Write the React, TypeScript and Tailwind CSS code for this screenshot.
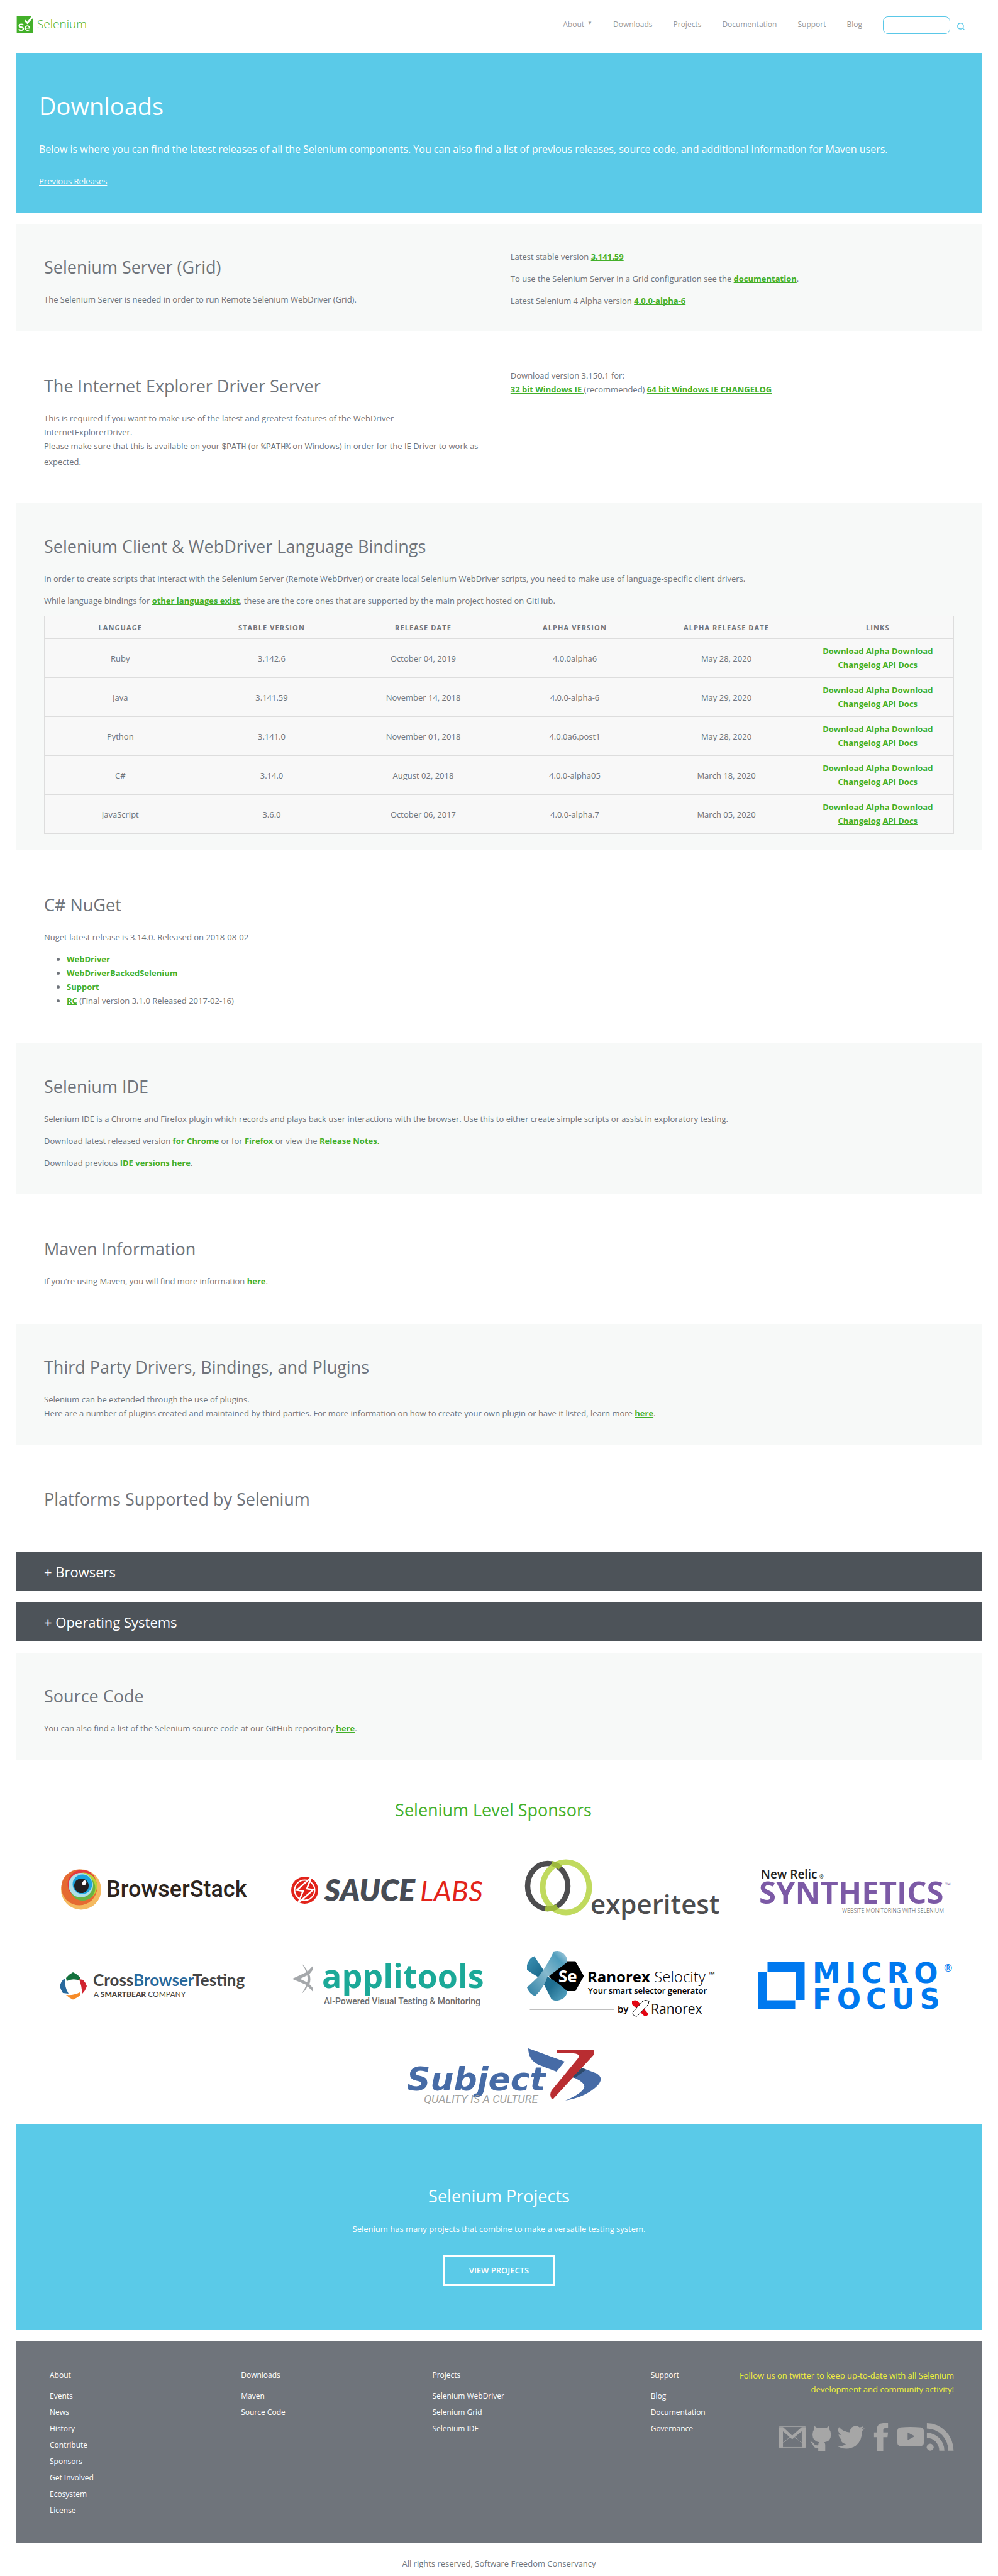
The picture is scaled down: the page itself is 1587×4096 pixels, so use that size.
import type { ReactNode } from "react";
import { SiSelenium } from "react-icons/si";
import { Search } from "lucide-react";

const A = ({ children }: { children: ReactNode }) => (
  <a href="#" className="font-bold text-[#43b02a] underline">
    {children}
  </a>
);

const H2 = ({ children }: { children: ReactNode }) => (
  <h2 className="mb-[21px] text-[27px] leading-[38px]">{children}</h2>
);

const Panel = ({ grey, tall, children }: { grey?: boolean; tall?: boolean; children: ReactNode }) => (
  <section className={`px-11 pt-[50px] ${tall ? "pb-[26px]" : "pb-[39px]"} ${grey ? "bg-[#f7f9f8]" : ""}`}>
    {children}
  </section>
);

const Split = ({ grey, left, right }: { grey?: boolean; left: ReactNode; right: ReactNode }) => (
  <section className={`flex py-[26px] ${grey ? "bg-[#f7f9f8]" : ""}`}>
    <div className="w-[49.5%] border-r border-[#cccccc] pt-6 pr-2 pb-[10px] pl-11">{left}</div>
    <div className="flex-1 pt-[15px] pr-11 pb-3 pl-[26px]">{right}</div>
  </section>
);

const nav = ["Downloads", "Projects", "Documentation", "Support", "Blog"];

const columns = ["Language", "Stable Version", "Release Date", "Alpha Version", "Alpha Release Date", "Links"];

const rows = [
  ["Ruby", "3.142.6", "October 04, 2019", "4.0.0alpha6", "May 28, 2020"],
  ["Java", "3.141.59", "November 14, 2018", "4.0.0-alpha-6", "May 29, 2020"],
  ["Python", "3.141.0", "November 01, 2018", "4.0.0a6.post1", "May 28, 2020"],
  ["C#", "3.14.0", "August 02, 2018", "4.0.0-alpha05", "March 18, 2020"],
  ["JavaScript", "3.6.0", "October 06, 2017", "4.0.0-alpha.7", "March 05, 2020"],
];

const footer = [
  { title: "About", links: ["Events", "News", "History", "Contribute", "Sponsors", "Get Involved", "Ecosystem", "License"] },
  { title: "Downloads", links: ["Maven", "Source Code"] },
  { title: "Projects", links: ["Selenium WebDriver", "Selenium Grid", "Selenium IDE"] },
  { title: "Support", links: ["Blog", "Documentation", "Governance"] },
];

const Header = () => (
  <header className="flex h-[85px] items-start justify-between pt-[25px]">
    <a href="#" className="flex items-center gap-[6px] text-[#43b02a]">
      <SiSelenium className="size-[27px]" />
      <span className="text-[19px] leading-[27px] font-light">Selenium</span>
    </a>
    <nav className="flex items-start text-[12px] text-[#999999]">
      <ul className="flex gap-[33px] pt-1 leading-[20px]">
        <li>
          <a href="#" className="flex gap-[5px]">
            About <span className="text-[8px] leading-[14px]">▼</span>
          </a>
        </li>
        {nav.map((n) => (
          <li key={n}>
            <a href="#">{n}</a>
          </li>
        ))}
      </ul>
      <form className="ml-[33px] flex items-center pt-px pr-[26px]">
        <input
          type="text"
          aria-label="Search"
          className="h-[28px] w-[107px] rounded-[8px] border border-[#5ac8e8] px-2 outline-none"
        />
        <button type="button" aria-label="Submit search" className="ml-[10px] pt-1 text-[#5ac8e8]">
          <Search className="size-[14px]" strokeWidth={2.5} />
        </button>
      </form>
    </nav>
  </header>
);

const Logo = ({ label, box, children }: { label: string; box: string; children: ReactNode }) => (
  <a href="#" aria-label={label} className="block w-full max-w-[328px]">
    <svg viewBox={box} className="w-full" role="img" aria-label={label}>
      {children}
    </svg>
  </a>
);

const sans = "'Open Sans', sans-serif";

const BrowserStack = () => (
  <Logo label="BrowserStack" box="-10 0 328 110">
    <circle cx="39" cy="53.5" r="32" fill="#f4b960" />
    <circle cx="36" cy="50" r="28.5" fill="#e56a32" />
    <circle cx="40.5" cy="45" r="23" fill="#e43b3f" />
    <circle cx="43" cy="48" r="21.5" fill="#b8d433" />
    <circle cx="41.5" cy="51" r="20" fill="#69b445" />
    <circle cx="38.5" cy="46.5" r="19.5" fill="#afdfe9" />
    <circle cx="41" cy="45" r="15.5" fill="#1ba4dc" />
    <circle cx="39.5" cy="47.5" r="11.5" fill="#231f20" />
    <ellipse cx="44" cy="43" rx="3" ry="4" fill="#fff" transform="rotate(25 44 43)" />
    <text x="79" y="65" fontFamily="Roboto, sans-serif" fontWeight="500" fontSize="36" fill="#2d241d">
      BrowserStack
    </text>
  </Logo>
);

const SauceLabs = () => (
  <Logo label="Sauce Labs" box="-10 0 328 110">
    <circle cx="22.5" cy="54.5" r="21.5" fill="#e2231a" />
    <circle cx="22.5" cy="54.5" r="16" fill="none" stroke="#fff" strokeWidth="2" />
    <path d="M33 34 L10 54.500 L20 56 L12 75 L36 54 L26 52 Z" fill="#e2231a" stroke="#fff" strokeWidth="2.500" />
    <text x="54" y="72" fontFamily="Lato, sans-serif" fontStyle="italic" fontWeight="800" fontSize="48" fill="#474c55">
      SAUCE
    </text>
    <text x="206" y="72" fontFamily="Lato, sans-serif" fontStyle="italic" fontWeight="400" fontSize="45" fill="#e2231a">
      LABS
    </text>
  </Logo>
);

const Experitest = () => (
  <Logo label="Experitest" box="-10 0 328 110">
    <ellipse cx="38" cy="48" rx="32" ry="36" fill="none" stroke="#4d4d4f" strokeWidth="8.500" />
    <ellipse cx="67" cy="50" rx="37" ry="40" fill="none" stroke="#c0da5e" strokeWidth="9" />
    <path d="M44 12 Q52 13 58 19 M34 84 Q44 85 53 81" fill="none" stroke="#9db83d" strokeWidth="8" />
    <text x="106" y="92" fontFamily={sans} fontWeight="600" fontSize="42" fill="#4d4d4f">
      experitest
    </text>
  </Logo>
);

const NewRelic = () => (
  <Logo label="New Relic Synthetics" box="-10 0 328 110">
    <text x="5" y="36" fontFamily={sans} fontWeight="600" fontSize="19" fill="#231f20">
      New Relic
    </text>
    <text x="98" y="36" fontFamily={sans} fontWeight="600" fontSize="8" fill="#231f20">
      ®
    </text>
    <text x="2" y="76" fontFamily={sans} fontWeight="700" fontSize="49" fill="#7c5aa6">
      SYNTHETICS
    </text>
    <text x="298" y="51" fontFamily={sans} fontSize="12" fill="#7c5aa6">
      ™
    </text>
    <text x="296" y="90" textAnchor="end" fontFamily={sans} fontWeight="300" fontSize="9" fill="#4d4d4f">
      WEBSITE MONITORING WITH SELENIUM
    </text>
  </Logo>
);

const CrossBrowserTesting = () => (
  <Logo label="CrossBrowserTesting" box="-10 0 328 110">
    <path d="M15 44 Q20 38 26 35 Q33 38 38 44 L36 48 Q26 44 16 49 Z" fill="#14713d" />
    <path d="M12 45 Q7 50 5 57 Q7 64 10 68 L19 69 Q12 58 14 46 Z" fill="#28699d" />
    <path d="M36 46 L42 47 Q46 51 48 57 Q46 64 41 69 Q40 57 36 46 Z" fill="#d1232f" />
    <path d="M15 71 Q28 72 37 67 L38 71 Q33 76 26 78.500 Q20 76 15 71 Z" fill="#f68b28" />
    <text x="58" y="57" fontFamily="Lato, sans-serif" fontWeight="700" fontSize="26" fill="#454545">
      Cross<tspan fill="#28699d">Browser</tspan>Testing
    </text>
    <text x="59" y="74" fontFamily="Lato, sans-serif" fontSize="12" fill="#454545">
      A <tspan fontWeight="900">SMARTBEAR</tspan> COMPANY
    </text>
  </Logo>
);

const Applitools = () => (
  <Logo label="Applitools" box="-10 0 328 110">
    <path
      d="M18 21.500 Q24 27 27 34 L35.500 25 L35.500 31 L30 38 Q33 46 30 54 L35.500 60 L35.500 66 L27 57 Q24 64 18 69 Q23 61 25 55 L2.500 45.500 L25 35 Q22 27 18 21.500 Z M26.500 40 L15 45.500 L26.500 51 Q28 45 26.500 40 Z"
      fill="#a5a8ab"
      fillRule="evenodd"
    />
    <text x="50" y="60" fontFamily={sans} fontWeight="700" fontSize="52" fill="#1ba998">
      applitools
    </text>
    <text x="53" y="86" fontFamily="Roboto, sans-serif" fontWeight="500" fontSize="14" fill="#6d6e70">
      AI-Powered Visual Testing &amp; Monitoring
    </text>
  </Logo>
);

const Ranorex = () => (
  <Logo label="Ranorex Selocity" box="-10 0 328 110">
    <defs>
      <linearGradient id="ranorexBand" x1="0" y1="1" x2="1" y2="0">
        <stop offset="0" stopColor="#2b7ea3" />
        <stop offset="0.500" stopColor="#86b9cd" />
        <stop offset="0.800" stopColor="#4f9dbd" />
        <stop offset="1" stopColor="#b5d3e2" />
      </linearGradient>
      <linearGradient id="ranorexCross" x1="0" y1="0" x2="1" y2="1">
        <stop offset="0" stopColor="#3c93b6" />
        <stop offset="0.350" stopColor="#1f6e90" />
        <stop offset="0.650" stopColor="#1f6e90" />
        <stop offset="1" stopColor="#5aa8c6" />
      </linearGradient>
    </defs>
    <path d="M59 17.500 H82 L95.500 41 L82 65 H59 L40 41 Z" fill="#000" />
    <path d="M5 24 Q8 12 17 9.500 Q23 20 29 28 L38 42 Q52 50 68 64 Q70 76 54 80 Q44 81 42 74 L27 45 Q14 38 5 31 Z" fill="url(#ranorexCross)" />
    <path d="M47 3 Q56 0 63 5 Q70 11 69 19 Q55 30 37 43 Q33 58 18 73 Q8 69 5 59 Q16 49 25 40 Q38 22 47 3 Z" fill="url(#ranorexBand)" />
    <text x="55" y="51" fontFamily={sans} fontWeight="700" fontSize="26" fill="#fff">
      Se
    </text>
    <text x="101" y="51" fontFamily={sans} fontWeight="700" fontSize="24" fill="#000">
      Ranorex <tspan fontWeight="300">Selocity</tspan>
    </text>
    <text x="294" y="43" fontFamily={sans} fontSize="13" fill="#000">
      ™
    </text>
    <text x="102" y="69" fontFamily={sans} fontWeight="600" fontSize="13" fill="#000">
      Your smart selector generator
    </text>
    <path d="M9.500 94.500 H143" stroke="#bfbfbf" />
    <text x="149" y="99" fontFamily={sans} fontWeight="600" fontSize="15" fill="#000">
      by
    </text>
    <path d="M172 81 Q177 78 181 81 L198 101 Q196 106 191 104 L172 86 Z" fill="#e30613" />
    <path d="M199 81 Q194 78 189 81 L173 99 Q173 105 180 105 L198 86 Z" fill="#fff" stroke="#111" />
    <text x="202" y="101" fontFamily={sans} fontWeight="500" fontSize="21" fill="#111">
      Ranorex
    </text>
  </Logo>
);

const MicroFocus = () => (
  <Logo label="Micro Focus" box="-10 0 328 110">
    <path d="M15.500 19 H74.500 V79 H60 V34 H15.500 Z M0.500 34 H15 V79.500 H59.500 V93 H0.500 Z" fill="#0079ef" />
    <g fontFamily="'DejaVu Sans', sans-serif" fontWeight="700" fontSize="45" fill="#0079ef">
      <text x="87" y="52" className="tracking-[8px]">
        MICRO
      </text>
      <text x="87" y="93" className="tracking-[8px]">
        FOCUS
      </text>
    </g>
    <text x="296" y="34" fontFamily={sans} fontSize="16" fill="#0079ef">
      ®
    </text>
  </Logo>
);

const Subject7 = () => (
  <Logo label="Subject7" box="-2 0 328 100">
    <text x="7" y="73" fontFamily="'DejaVu Sans', sans-serif" fontStyle="italic" fontWeight="700" fontSize="52" fill="#466ba6">
      Subject
    </text>
    <path d="M200 6 L258 27 L245 43 L216 32 Q200 24 200 6 Z" fill="#466ba6" />
    <path d="M285.500 37 L309 46 Q323 55 306 69 Q288 84 259 89 Q276 82 285 74 Q298 63 271 52 Z" fill="#466ba6" />
    <path d="M245 8 H302 Q306 9 304.500 16 L240 86 L237.500 87 Q233 80 237 73 L279 22 Q284 15 272 14 H245 Z" fill="#b92d31" />
    <path d="M285.500 37 L292 40 L274 53 L270 52 Z" fill="#2d4a6b" />
    <text x="34" y="93" fontFamily="Roboto, sans-serif" fontStyle="italic" fontSize="18" fill="#a3a39f">
      QUALITY IS A CULTURE
    </text>
  </Logo>
);

const Social = ({ label, box, children }: { label: string; box: string; children: ReactNode }) => (
  <a href="#" aria-label={label}>
    <svg viewBox={box} className="size-11" fill="#a6a6a6">
      {children}
    </svg>
  </a>
);

const SocialRow = () => (
  <div className="flex justify-end gap-[3px]">
    <Social label="Mailing list" box="34 51 150 150">
      <path d="M34 72 H58 L108 118 L160 72 H183 V183 H160 V95 L108 138 L58 95 V183 H34 Z" />
      <path d="M38 70 H180 M38 182 H180 M58 158 L96 126 M160 158 L121 126" stroke="#a6a6a6" strokeWidth="3" fill="none" />
    </Social>
    <Social label="GitHub" box="195 51 150 150">
      <path d="M229 66 Q236 70 245 77 Q268 73 293 77 Q302 70 309 66 Q313 76 311 86 Q319 95 319 112 Q319 150 283 154 Q288 160 288 168 V201 H250 V185 Q232 188 225 176 Q218 160 207 152 Q218 149 226 160 Q234 174 250 170 Q250 158 255 154 Q219 148 219 112 Q219 95 227 86 Q225 76 229 66 Z" />
    </Social>
    <Social label="Twitter" box="357 51 150 150">
      <path d="M364 72 Q390 100 425 101 Q422 68 455 66 Q468 66 476 74 Q487 72 497 67 Q494 76 487 82 Q495 81 503 79 Q498 87 490 93 Q490 145 455 174 Q408 203 357 177 Q382 178 402 164 Q380 160 374 143 H387 Q364 134 362 112 Q368 115 375 115 Q352 96 364 72 Z" />
    </Social>
    <Social label="Facebook" box="518 51 150 150">
      <path d="M571 201 V127 H555 V101 H571 V84 Q571 52 604 51 H631 V78 H615 Q605 78 605 88 V101 H631 L628 127 H605 V201 Z" />
    </Social>
    <Social label="YouTube" box="679 51 150 150">
      <path
        d="M700 74 Q753 69 808 74 Q824 76 826 92 Q829 125 826 158 Q824 173 808 175 Q753 179 700 175 Q684 173 682 158 Q678 125 682 92 Q684 76 700 74 Z M738 101 V143 L777 122 Z"
        fillRule="evenodd"
      />
    </Social>
    <Social label="RSS" box="840 51 150 150">
      <circle cx="861" cy="181" r="19" />
      <path d="M843 51 A145 150 0 0 1 988 200 H959 A116 119 0 0 0 843 80 Z M843 103 A95 98 0 0 1 938 200 H910 A67 70 0 0 0 843 130 Z" />
    </Social>
  </div>
);

export default function App() {
  return (
    <div className="bg-white px-[26px] font-['Open_Sans',sans-serif] text-[13px] leading-[22px] text-[#6f747b]">
      <Header />
      <main>
        <section className="bg-[#5acae8] px-9 pt-[56px] pb-[39px] text-white">
          <h1 className="text-[38px] leading-[54px]">Downloads</h1>
          <p className="mt-[27px] text-[16px] leading-[30px]">
            Below is where you can find the latest releases of all the Selenium components. You can also find a list of previous
            releases, source code, and additional information for Maven users.
          </p>
          <p className="mt-[25px]">
            <a href="#" className="underline">
              Previous Releases
            </a>
          </p>
        </section>

        <div className="mt-[18px] flex flex-col gap-[18px]">
          <Split
            grey
            left={
              <>
                <H2>Selenium Server (Grid)</H2>
                <p>The Selenium Server is needed in order to run Remote Selenium WebDriver (Grid).</p>
              </>
            }
            right={
              <div className="flex flex-col gap-[13px]">
                <p>
                  Latest stable version <A>3.141.59</A>
                </p>
                <p>
                  To use the Selenium Server in a Grid configuration see the <A>documentation</A>.
                </p>
                <p>
                  Latest Selenium 4 Alpha version <A>4.0.0-alpha-6</A>
                </p>
              </div>
            }
          />

          <Split
            left={
              <>
                <H2>The Internet Explorer Driver Server</H2>
                <p>
                  This is required if you want to make use of the latest and greatest features of the WebDriver
                  <br />
                  InternetExplorerDriver.
                </p>
                <p>
                  Please make sure that this is available on your{" "}
                  <code className="font-['Liberation_Mono',monospace] text-[13px]">$PATH</code> (or{" "}
                  <code className="font-['Liberation_Mono',monospace] text-[13px]">%PATH%</code> on Windows) in order for the IE
                  Driver to work as
                </p>
                <p className="leading-[24px]">expected.</p>
              </>
            }
            right={
              <p>
                Download version 3.150.1 for:
                <br />
                <A>32 bit Windows IE </A>(recommended) <A>64 bit Windows IE CHANGELOG</A>
              </p>
            }
          />

          <Panel grey tall>
            <H2>Selenium Client &amp; WebDriver Language Bindings</H2>
            <p>
              In order to create scripts that interact with the Selenium Server (Remote WebDriver) or create local Selenium
              WebDriver scripts, you need to make use of language-specific client drivers.
            </p>
            <p className="mt-[13px]">
              While language bindings for <A>other languages exist</A>, these are the core ones that are supported by the main
              project hosted on GitHub.
            </p>
            <table className="mt-[13px] w-full table-fixed border-collapse border border-[#dddddd] bg-[#f8f8f8] text-center">
              <thead>
                <tr className="border-b border-[#dddddd]">
                  {columns.map((c) => (
                    <th key={c} className="h-[36px] text-[11px] font-bold tracking-widest uppercase">
                      {c}
                    </th>
                  ))}
                </tr>
              </thead>
              <tbody>
                {rows.map((r) => (
                  <tr key={r[0]} className="border-b border-[#dddddd]">
                    {r.map((c) => (
                      <td key={c}>{c}</td>
                    ))}
                    <td className="px-6 pt-2 pb-[9px]">
                      <A>Download</A> <A>Alpha Download</A> <A>Changelog</A> <A>API Docs</A>
                    </td>
                  </tr>
                ))}
              </tbody>
            </table>
          </Panel>

          <Panel>
            <H2>C# NuGet</H2>
            <p>Nuget latest release is 3.14.0. Released on 2018-08-02</p>
            <ul className="mt-[13px] list-disc pl-9">
              <li>
                <A>WebDriver</A>
              </li>
              <li>
                <A>WebDriverBackedSelenium</A>
              </li>
              <li>
                <A>Support</A>
              </li>
              <li>
                <A>RC</A> (Final version 3.1.0 Released 2017-02-16)
              </li>
            </ul>
          </Panel>

          <Panel grey>
            <H2>Selenium IDE</H2>
            <p>
              Selenium IDE is a Chrome and Firefox plugin which records and plays back user interactions with the browser. Use this
              to either create simple scripts or assist in exploratory testing.
            </p>
            <p className="mt-[13px]">
              Download latest released version <A>for Chrome</A> or for <A>Firefox</A> or view the <A>Release Notes.</A>
            </p>
            <p className="mt-[13px]">
              Download previous <A>IDE versions here</A>.
            </p>
          </Panel>

          <Panel>
            <H2>Maven Information</H2>
            <p>
              If you're using Maven, you will find more information <A>here</A>.
            </p>
          </Panel>

          <Panel grey>
            <H2>Third Party Drivers, Bindings, and Plugins</H2>
            <p>
              Selenium can be extended through the use of plugins.
              <br />
              Here are a number of plugins created and maintained by third parties. For more information on how to create your own
              plugin or have it listed, learn more <A>here</A>.
            </p>
          </Panel>

          <Panel tall>
            <H2>Platforms Supported by Selenium</H2>
          </Panel>

          <button type="button" className="bg-[#4d5359] px-11 py-4 text-left text-[22px] leading-[30px] text-white">
            + Browsers
          </button>
          <button type="button" className="bg-[#4d5359] px-11 py-4 text-left text-[22px] leading-[30px] text-white">
            + Operating Systems
          </button>

          <Panel grey>
            <H2>Source Code</H2>
            <p>
              You can also find a list of the Selenium source code at our GitHub repository <A>here</A>.
            </p>
          </Panel>
        </div>

        <section className="pt-[61px] pb-[27px]">
          <h2 className="pr-[18px] text-center text-[27px] leading-[38px] text-[#43b02a]">Selenium Level Sponsors</h2>
          <div className="mt-[54px] grid grid-cols-4 justify-items-center gap-y-10 pr-4 pl-8">
            <BrowserStack />
            <SauceLabs />
            <Experitest />
            <NewRelic />
            <CrossBrowserTesting />
            <Applitools />
            <Ranorex />
            <MicroFocus />
            <div className="col-span-4 flex w-full justify-center">
              <Subject7 />
            </div>
          </div>
        </section>

        <section className="flex flex-col items-center bg-[#5acae8] pt-[95px] pb-[70px] text-center text-white">
          <h2 className="text-[27px] leading-[38px]">Selenium Projects</h2>
          <p className="mt-[22px]">Selenium has many projects that combine to make a versatile testing system.</p>
          <a href="#" className="mt-[31px] border-[3px] border-white px-[39px] py-[11px] leading-[21px] font-semibold">
            VIEW PROJECTS
          </a>
        </section>
      </main>

      <footer>
        <div className="mt-[18px] grid min-h-[321px] grid-cols-[304fr_304fr_347fr_121fr_361fr] bg-[#6f747b] pt-[43px] pr-11 pl-[53px] text-[12px] text-white">
          {footer.map((col) => (
            <div key={col.title}>
              <h3>{col.title}</h3>
              <ul className="mt-[9px]">
                {col.links.map((l) => (
                  <li key={l} className="leading-[26px] whitespace-nowrap">
                    <a href="#">{l}</a>
                  </li>
                ))}
              </ul>
            </div>
          ))}
          <div className="text-right">
            <p className="mb-[43px] text-[13px] text-[#f2f03c]">
              Follow us on twitter to keep up-to-date with all Selenium development and community activity!
            </p>
            <SocialRow />
          </div>
        </div>
        <p className="pt-[21px] pb-[10px] text-center">All rights reserved, Software Freedom Conservancy</p>
      </footer>
    </div>
  );
}
